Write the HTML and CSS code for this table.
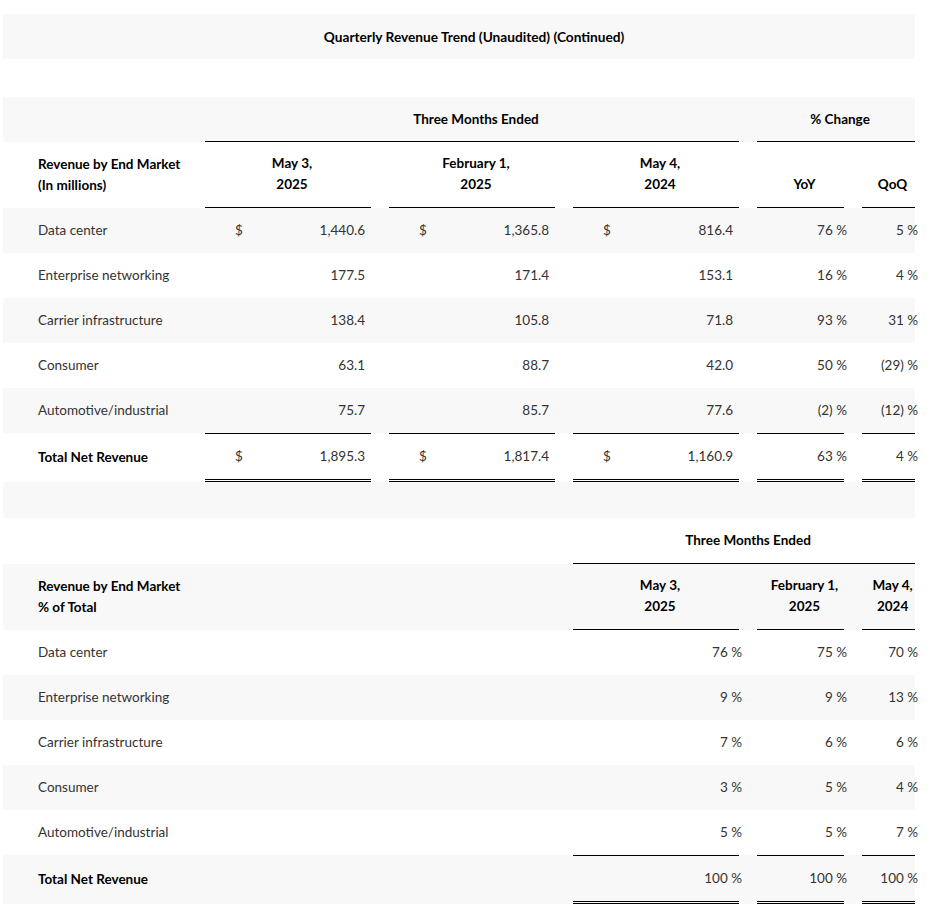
FILE: index.html
```html
<!DOCTYPE html>
<html lang="en">
<head>
<meta charset="utf-8">
<title>Quarterly Revenue Trend (Unaudited) (Continued)</title>
<link rel="stylesheet" href="styles.css">
</head>
<body>
<table class="report">
  <colgroup>
    <col class="c-label"><col class="c-wide"><col class="c-gap"><col class="c-wide"><col class="c-gap"><col class="c-wide"><col class="c-gap"><col class="c-yoy"><col class="c-gap"><col class="c-qoq">
  </colgroup>
  <tbody>
    <tr class="shade title-row"><td colspan="10" class="title">Quarterly Revenue Trend (Unaudited) (Continued)</td></tr>
    <tr class="spacer"><td colspan="10"></td></tr>
    <tr class="shade group-row">
      <td></td>
      <td colspan="5" class="group rule">Three Months Ended</td>
      <td></td>
      <td colspan="3" class="group rule">% Change</td>
    </tr>
    <tr class="head-row">
      <td class="label head">Revenue by End Market<br>(In millions)</td>
      <td class="colhead rule">May 3,<br>2025</td><td></td>
      <td class="colhead rule">February 1,<br>2025</td><td></td>
      <td class="colhead rule">May 4,<br>2024</td><td></td>
      <td class="colhead rule">YoY</td><td></td>
      <td class="colhead rule">QoQ</td>
    </tr>
    <tr class="shade data">
      <td class="label">Data center</td>
      <td><div class="money"><span>$</span><span>1,440.6</span></div></td><td></td>
      <td><div class="money"><span>$</span><span>1,365.8</span></div></td><td></td>
      <td><div class="money"><span>$</span><span>816.4</span></div></td><td></td>
      <td class="pct"><span>76 %</span></td><td></td>
      <td class="pct"><span>5 %</span></td>
    </tr>
    <tr class="data">
      <td class="label">Enterprise networking</td>
      <td class="num">177.5</td><td></td>
      <td class="num">171.4</td><td></td>
      <td class="num">153.1</td><td></td>
      <td class="pct"><span>16 %</span></td><td></td>
      <td class="pct"><span>4 %</span></td>
    </tr>
    <tr class="shade data">
      <td class="label">Carrier infrastructure</td>
      <td class="num">138.4</td><td></td>
      <td class="num">105.8</td><td></td>
      <td class="num">71.8</td><td></td>
      <td class="pct"><span>93 %</span></td><td></td>
      <td class="pct"><span>31 %</span></td>
    </tr>
    <tr class="data">
      <td class="label">Consumer</td>
      <td class="num">63.1</td><td></td>
      <td class="num">88.7</td><td></td>
      <td class="num">42.0</td><td></td>
      <td class="pct"><span>50 %</span></td><td></td>
      <td class="pct"><span>(29) %</span></td>
    </tr>
    <tr class="shade data">
      <td class="label">Automotive/industrial</td>
      <td class="num">75.7</td><td></td>
      <td class="num">85.7</td><td></td>
      <td class="num">77.6</td><td></td>
      <td class="pct"><span>(2) %</span></td><td></td>
      <td class="pct"><span>(12) %</span></td>
    </tr>
    <tr class="total">
      <td class="label head">Total Net Revenue</td>
      <td class="tot"><div class="money"><span>$</span><span>1,895.3</span></div></td><td></td>
      <td class="tot"><div class="money"><span>$</span><span>1,817.4</span></div></td><td></td>
      <td class="tot"><div class="money"><span>$</span><span>1,160.9</span></div></td><td></td>
      <td class="tot pct"><span>63 %</span></td><td></td>
      <td class="tot pct"><span>4 %</span></td>
    </tr>
    <tr class="shade spacer2"><td colspan="10"></td></tr>

    <tr class="group-row2">
      <td colspan="5"></td>
      <td colspan="5" class="group rule">Three Months Ended</td>
    </tr>
    <tr class="shade head-row">
      <td colspan="5" class="label head">Revenue by End Market<br>% of Total</td>
      <td class="colhead rule">May 3,<br>2025</td><td></td>
      <td class="colhead rule">February 1,<br>2025</td><td></td>
      <td class="colhead rule">May 4,<br>2024</td>
    </tr>
    <tr class="data">
      <td colspan="5" class="label">Data center</td>
      <td class="pct"><span>76 %</span></td><td></td>
      <td class="pct"><span>75 %</span></td><td></td>
      <td class="pct"><span>70 %</span></td>
    </tr>
    <tr class="shade data">
      <td colspan="5" class="label">Enterprise networking</td>
      <td class="pct"><span>9 %</span></td><td></td>
      <td class="pct"><span>9 %</span></td><td></td>
      <td class="pct"><span>13 %</span></td>
    </tr>
    <tr class="data">
      <td colspan="5" class="label">Carrier infrastructure</td>
      <td class="pct"><span>7 %</span></td><td></td>
      <td class="pct"><span>6 %</span></td><td></td>
      <td class="pct"><span>6 %</span></td>
    </tr>
    <tr class="shade data">
      <td colspan="5" class="label">Consumer</td>
      <td class="pct"><span>3 %</span></td><td></td>
      <td class="pct"><span>5 %</span></td><td></td>
      <td class="pct"><span>4 %</span></td>
    </tr>
    <tr class="data">
      <td colspan="5" class="label">Automotive/industrial</td>
      <td class="pct"><span>5 %</span></td><td></td>
      <td class="pct"><span>5 %</span></td><td></td>
      <td class="pct"><span>7 %</span></td>
    </tr>
    <tr class="shade total">
      <td colspan="5" class="label head">Total Net Revenue</td>
      <td class="tot pct"><span>100 %</span></td><td></td>
      <td class="tot pct"><span>100 %</span></td><td></td>
      <td class="tot pct"><span>100 %</span></td>
    </tr>
  </tbody>
</table>
</body>
</html>
```
FILE: styles.css
```css
html, body {
  margin: 0;
  padding: 0;
  background: #ffffff;
}

body {
  font-family: Lato, "Noto Sans", sans-serif;
  font-size: 13.5px;
  color: #333333;
}

.report {
  border-collapse: separate;
  border-spacing: 0;
  table-layout: fixed;
  width: 912px;
  margin: 14px 0 0 3px;
}

.c-label { width: 202px; }
.c-wide { width: 166px; }
.c-gap { width: 18px; }
.c-yoy { width: 87px; }
.c-qoq { width: 53px; }

.report td {
  box-sizing: border-box;
  padding: 0;
  vertical-align: middle;
  line-height: 21px;
  white-space: nowrap;
}

.shade {
  background: #f8f8f8;
}

.title-row td {
  height: 45px;
}

.report .title {
  text-align: center;
  font-weight: 700;
  color: #000;
  padding-left: 30px;
  font-size: 13.7px;
}

.spacer td {
  height: 38px;
}

.spacer2 td {
  height: 36px;
}

.group-row td {
  height: 45px;
}

.group-row2 td {
  height: 46px;
}

.report .group {
  text-align: center;
  font-weight: 700;
  color: #000;
  padding-left: 8px;
}

.rule {
  border-bottom: 1px solid #000;
}

.head-row td {
  height: 66px;
  vertical-align: bottom;
  padding-bottom: 12px;
}

.report .colhead {
  text-align: center;
  font-weight: 700;
  color: #000;
  padding-left: 8px;
  padding-bottom: 12px;
}

.report .label {
  padding-left: 35px;
}

.head {
  font-weight: 700;
  color: #000;
}

.data td {
  height: 45px;
}

.money {
  display: flex;
  justify-content: space-between;
  padding: 0 6px 0 30px;
}

.report .num {
  text-align: right;
  padding-right: 6px;
}

.pct {
  text-align: right;
}

.pct span {
  margin-right: -3px;
}

.total td {
  height: 49px;
}

.tot {
  border-top: 1px solid #000;
  border-bottom: 3px double #000;
}
```
